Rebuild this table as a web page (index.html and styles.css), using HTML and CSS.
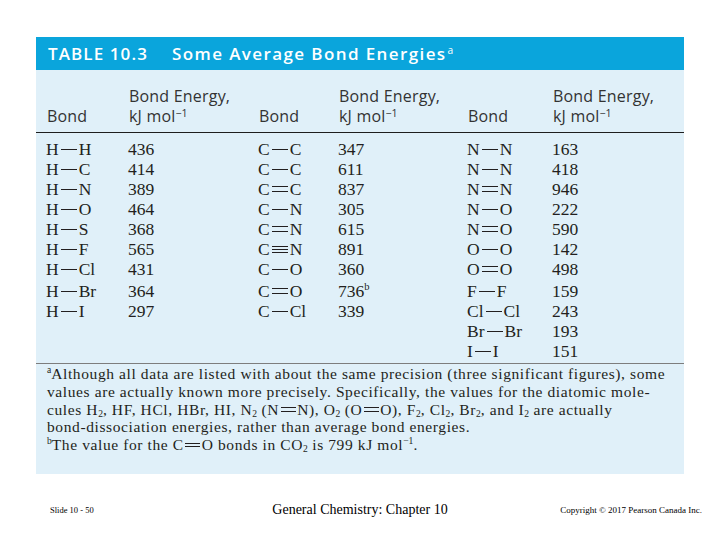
FILE: index.html
```html
<!DOCTYPE html>
<html lang="en">
<head>
<meta charset="utf-8">
<title>Table 10.3 Some Average Bond Energies</title>
<link rel="stylesheet" href="styles.css">
</head>
<body>
<div class="slide">
  <section class="panel">
    <h1 class="title"><span class="tnum">TABLE 10.3</span><span class="tname">Some Average Bond Energies<sup class="tsup">a</sup></span></h1>
    <div class="thead grid">
      <div>Bond</div><div>Bond Energy,<br>kJ mol<sup>−1</sup></div>
      <div>Bond</div><div>Bond Energy,<br>kJ mol<sup>−1</sup></div>
      <div>Bond</div><div>Bond Energy,<br>kJ mol<sup>−1</sup></div>
    </div>
    <div class="tbody">
      <div class="row grid"><div>H<i class="bd s"></i>H</div><div>436</div><div>C<i class="bd s"></i>C</div><div>347</div><div>N<i class="bd s"></i>N</div><div>163</div></div>
      <div class="row grid"><div>H<i class="bd s"></i>C</div><div>414</div><div>C<i class="bd s"></i>C</div><div>611</div><div>N<i class="bd s"></i>N</div><div>418</div></div>
      <div class="row grid"><div>H<i class="bd s"></i>N</div><div>389</div><div>C<i class="bd d"></i>C</div><div>837</div><div>N<i class="bd d"></i>N</div><div>946</div></div>
      <div class="row grid"><div>H<i class="bd s"></i>O</div><div>464</div><div>C<i class="bd s"></i>N</div><div>305</div><div>N<i class="bd s"></i>O</div><div>222</div></div>
      <div class="row grid"><div>H<i class="bd s"></i>S</div><div>368</div><div>C<i class="bd d"></i>N</div><div>615</div><div>N<i class="bd d"></i>O</div><div>590</div></div>
      <div class="row grid"><div>H<i class="bd s"></i>F</div><div>565</div><div>C<i class="bd t"></i>N</div><div>891</div><div>O<i class="bd s"></i>O</div><div>142</div></div>
      <div class="row grid"><div>H<i class="bd s"></i>Cl</div><div>431</div><div>C<i class="bd s"></i>O</div><div>360</div><div>O<i class="bd d"></i>O</div><div>498</div></div>
      <div class="row grid gap"><div>H<i class="bd s"></i>Br</div><div>364</div><div>C<i class="bd d"></i>O</div><div>736<sup>b</sup></div><div>F<i class="bd s"></i>F</div><div>159</div></div>
      <div class="row grid"><div>H<i class="bd s"></i>I</div><div>297</div><div>C<i class="bd s"></i>Cl</div><div>339</div><div>Cl<i class="bd s"></i>Cl</div><div>243</div></div>
      <div class="row grid"><div></div><div></div><div></div><div></div><div>Br<i class="bd s"></i>Br</div><div>193</div></div>
      <div class="row grid"><div></div><div></div><div></div><div></div><div>I<i class="bd s"></i>I</div><div>151</div></div>
    </div>
    <div class="notes">
      <p><sup>a</sup>Although all data are listed with about the same precision (three significant figures), some<br>values are actually known more precisely. Specifically, the values for the diatomic mole-<br>cules H<sub>2</sub>, HF, HCl, HBr, HI, N<sub>2</sub> (N<i class="bd d sm"></i>N), O<sub>2</sub> (O<i class="bd d sm"></i>O), F<sub>2</sub>, Cl<sub>2</sub>, Br<sub>2</sub>, and I<sub>2</sub> are actually<br>bond-dissociation energies, rather than average bond energies.</p>
      <p><sup>b</sup>The value for the C<i class="bd d sm"></i>O bonds in CO<sub>2</sub> is 799 kJ mol<sup>−1</sup>.</p>
    </div>
  </section>
  <footer class="foot">
    <span class="f-left">Slide 10 - 50</span>
    <span class="f-mid">General Chemistry: Chapter 10</span>
    <span class="f-right">Copyright © 2017 Pearson Canada Inc.</span>
  </footer>
</div>
</body>
</html>
```

FILE: styles.css
```css
html, body {
  margin: 0;
  padding: 0;
  background: #ffffff;
}

.slide {
  width: 720px;
  height: 540px;
  display: flex;
  flex-direction: column;
  font-family: "Liberation Serif", "Times New Roman", serif;
  color: #231f20;
}

.panel {
  margin: 37px 0 0 36px;
  width: 648px;
  height: 437px;
  background: #e0f0f9;
  display: flex;
  flex-direction: column;
}

.title {
  margin: 0;
  height: 33px;
  box-sizing: border-box;
  padding-left: 12px;
  background: #0aa5dc;
  color: #ffffff;
  font-family: "Open Sans", "DejaVu Sans", sans-serif;
  font-weight: 600;
  font-size: 17px;
  letter-spacing: 1.1px;
  white-space: nowrap;
  display: flex;
  align-items: center;
}

.tnum {
  margin-right: 24px;
}

.tname {
  letter-spacing: 1.4px;
}

.tsup {
  font-size: 0.6em;
  font-weight: 400;
  line-height: 0;
  letter-spacing: 0;
  vertical-align: 0.55em;
  margin-left: 1px;
}

.grid {
  display: grid;
  grid-template-columns: 82px 130px 80px 129px 85px 1fr;
  padding-left: 10px;
}

.thead {
  height: 63px;
  box-sizing: border-box;
  align-items: end;
  padding-bottom: 6px;
  border-bottom: 1px solid #1e1e1e;
  font-family: "Open Sans", "DejaVu Sans", sans-serif;
  font-size: 16px;
  line-height: 20px;
  letter-spacing: 0.2px;
  color: #333333;
}

.thead > div {
  padding-left: 1px;
}

.thead sup {
  font-size: 0.66em;
  line-height: 0;
  vertical-align: 0.48em;
  letter-spacing: 0;
}

.tbody {
  padding-top: 6px;
  padding-bottom: 2px;
  font-size: 17.5px;
  line-height: 20px;
}

.row.gap {
  margin-top: 2px;
}

.row sup {
  font-size: 0.6em;
  line-height: 0;
  vertical-align: 0.65em;
}

.bd {
  display: inline-block;
  width: 16px;
  height: 8px;
  margin: 0 2px;
  vertical-align: 1.8px;
  background-repeat: no-repeat;
}

.bd.s {
  background-image: linear-gradient(#231f20, #231f20);
  background-size: 100% 1.4px;
  background-position: 0 3.3px;
}

.bd.d {
  background-image: linear-gradient(#231f20, #231f20), linear-gradient(#231f20, #231f20);
  background-size: 100% 1.3px, 100% 1.3px;
  background-position: 0 1.2px, 0 5.4px;
}

.bd.t {
  background-image: linear-gradient(#231f20, #231f20), linear-gradient(#231f20, #231f20), linear-gradient(#231f20, #231f20);
  background-size: 100% 1.2px, 100% 1.2px, 100% 1.2px;
  background-position: 0 0.4px, 0 3.4px, 0 6.4px;
}

.bd.sm {
  width: 15px;
  height: 7px;
  margin: 0 1.5px;
  vertical-align: 1.5px;
}

.bd.sm.d {
  background-position: 0 1px, 0 4.8px;
}

.notes {
  border-top: 1px solid #7d7d7d;
  padding: 1px 6px 0 11px;
  font-size: 15.5px;
  line-height: 17.8px;
  letter-spacing: 0.6px;
  white-space: nowrap;
  color: #231f20;
}

.notes p {
  margin: 0;
}

.notes sup {
  font-size: 0.62em;
  line-height: 0;
  vertical-align: 0.6em;
  letter-spacing: 0;
}

.notes sub {
  font-size: 0.62em;
  line-height: 0;
  vertical-align: -0.25em;
  letter-spacing: 0;
}

.foot {
  display: grid;
  grid-template-columns: 1fr auto 1fr;
  align-items: center;
  padding: 0 18px;
  margin-top: 26px;
  height: 20px;
  font-family: "Liberation Serif", "Times New Roman", serif;
  color: #000000;
}

.f-left {
  font-size: 8.5px;
  justify-self: start;
  margin-left: 32px;
}

.f-mid {
  font-size: 14px;
}

.f-right {
  font-size: 9px;
  justify-self: end;
}
```
